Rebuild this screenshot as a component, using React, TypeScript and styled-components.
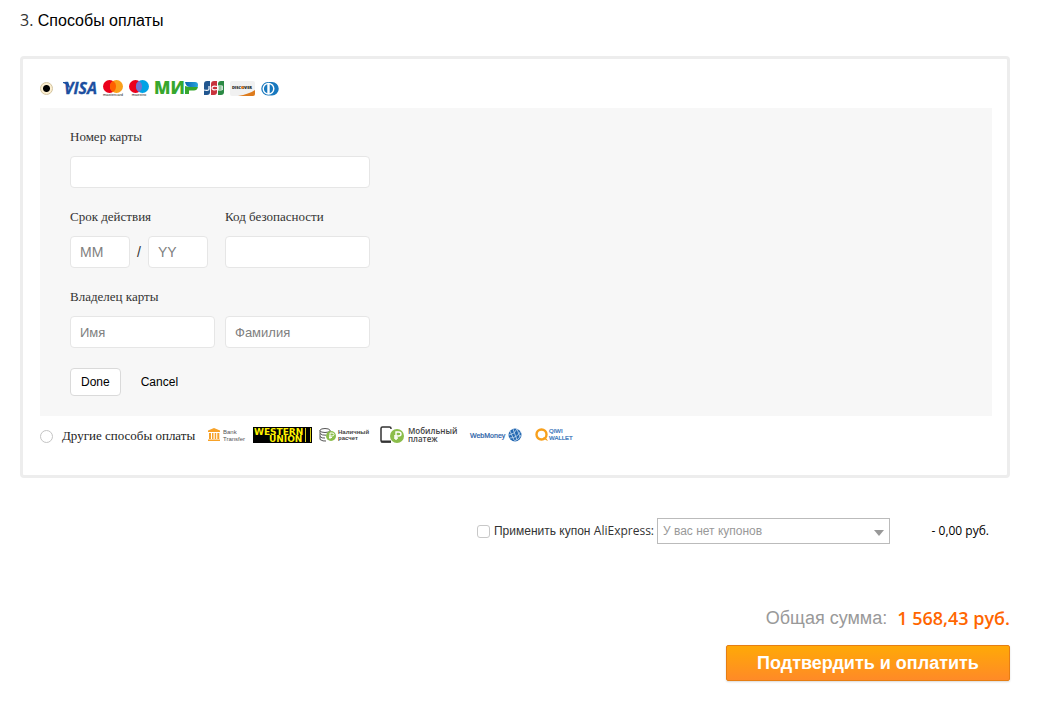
import React, { useState } from 'react';
import styled, { createGlobalStyle } from 'styled-components';

const sans = '"Liberation Sans", Arial, sans-serif';
const open = '"Open Sans", "Liberation Sans", sans-serif';
const serif = '"Liberation Serif", "Times New Roman", serif';

const GlobalStyle = createGlobalStyle`
  * { box-sizing: border-box; }
  body { margin: 0; background: #fff; color: #000; font-family: ${sans}; }
  input, button, select { margin: 0; font-family: ${sans}; }
`;

const Page = styled.main`
  padding: 8px 42px 24px 20px;
`;

const Heading = styled.h1`
  height: 24px;
  margin: 0 0 24px;
  font-size: 16px;
  line-height: 24px;
  font-weight: 400;
`;

const Latin = styled.span`
  font-family: ${open};
  color: #333;
`;

const Methods = styled.section`
  padding: 9px 15px 19px 17px;
  border: 3px solid #ededed;
  border-radius: 4px;
`;

const MethodRow = styled.div`
  display: flex;
  align-items: center;
  height: 40px;
`;

const Radio = styled.input`
  appearance: none;
  flex: none;
  width: 13px;
  height: 13px;
  border: 1px solid #c4c4c4;
  border-radius: 50%;
  background: #fff;
  &:checked {
    border-color: #d3c4a0;
    background: radial-gradient(circle, #000 0 3px, #fbeed0 4px);
  }
`;

const MethodLabel = styled.label`
  display: flex;
  align-items: center;
  padding-left: 9px;
  font-family: ${serif};
  font-size: 13px;
  line-height: 18px;
  color: #222;
`;

const Logos = styled.span<{ $indent: number }>`
  display: flex;
  gap: 6px;
  margin-left: ${(p) => p.$indent}px;
  svg { display: block; flex: none; overflow: visible; }
`;

const CardForm = styled.form`
  padding: 20px 30px;
  background: #f7f7f7;
`;

const FieldRow = styled.div`
  display: flex;
  gap: 10px;
  margin-bottom: 20px;
`;

const FieldSet = styled.fieldset`
  min-width: 0;
  margin: 0;
  padding: 0;
  border: 0;
`;

const Field = styled.div<{ $width: number }>`
  width: ${(p) => p.$width}px;
`;

const Caption = styled.label`
  display: block;
  height: 28px;
  font-family: ${serif};
  font-size: 13px;
  line-height: 18px;
  color: #333;
`;

const Inline = styled.div<{ $gap: number }>`
  display: flex;
  align-items: center;
  gap: ${(p) => p.$gap}px;
  font-size: 14px;
  color: #333;
`;

const TextInput = styled.input<{ $size?: number }>`
  width: 100%;
  height: 32px;
  padding: 0 9px;
  border: 1px solid #e6e6e6;
  border-radius: 4px;
  background: #fff;
  font-size: ${(p) => p.$size ?? 13}px;
  color: #333;
  &::placeholder { color: #808080; opacity: 1; }
`;

const FormButton = styled.button<{ $plain?: boolean }>`
  height: 28px;
  padding: 0 10px;
  border: 1px solid ${(p) => (p.$plain ? 'transparent' : '#dadada')};
  border-radius: 4px;
  background: ${(p) => (p.$plain ? 'transparent' : '#fff')};
  font-size: 12px;
  color: #000;
`;

const CouponRow = styled.div`
  display: flex;
  align-items: center;
  justify-content: flex-end;
  margin-top: 40px;
  padding-right: 21px;
  font-size: 12px;
  line-height: 26px;
`;

const Checkbox = styled.input`
  appearance: none;
  width: 13px;
  height: 13px;
  border: 1px solid #c8c8c8;
  border-radius: 3px;
  background: #fff;
  &:checked { background: #777; }
`;

const CouponLabel = styled.label`
  height: 26px;
  padding: 0 3px 0 4px;
  color: #333;
`;

const SelectBox = styled.div`
  position: relative;
  width: 233px;
  height: 26px;
  svg { position: absolute; right: 6px; top: 12px; pointer-events: none; }
`;

const Select = styled.select`
  appearance: none;
  display: block;
  width: 100%;
  height: 26px;
  padding: 0 20px 0 5px;
  border: 1px solid #bbb;
  border-radius: 0;
  background: #fff;
  font-size: 12px;
  color: #999;
`;

const Discount = styled.span`
  min-width: 99px;
  font-family: ${open};
  text-align: right;
`;

const TotalRow = styled.div`
  display: flex;
  justify-content: flex-end;
  align-items: center;
  gap: 10px;
  margin: 62px 0 14px;
  font-size: 18px;
  line-height: 25px;
  color: #999;
`;

const TotalValue = styled.strong`
  font-family: ${open};
  font-weight: 600;
  color: #f60;
`;

const Actions = styled.div`
  display: flex;
  justify-content: flex-end;
`;

const PayButton = styled.button`
  width: 284px;
  height: 36px;
  border: 1px solid #e67e13;
  border-radius: 2px;
  background: linear-gradient(#ffa907, #ff8a27);
  box-shadow: 0 1px 2px rgba(0, 0, 0, 0.15);
  font-size: 18px;
  font-weight: 700;
  color: #fff;
`;

const CardLogos = () => (
  <Logos $indent={1}>
    <svg width="34" height="18" role="img" aria-label="Visa">
      <text x="1" y="15" fontFamily="Open Sans" fontWeight="700" fontStyle="italic" fontSize="16" fill="#1c4fa0" stroke="#1c4fa0" strokeWidth="0.300">VISA</text>
      <path d="M0 3h5l2 5-1 1Q4 5 0 4z" fill="#1c4fa0" />
    </svg>
    <svg width="20" height="18" role="img" aria-label="Mastercard">
      <circle cx="6.500" cy="7.500" r="6.500" fill="#eb001b" />
      <circle cx="13.500" cy="7.500" r="6.500" fill="#f9a01b" />
      <path d="M10 2a6.500 6.500 0 0 1 0 11a6.500 6.500 0 0 1 0-11z" fill="#ff5f00" />
      <text x="10" y="17" textAnchor="middle" fontFamily="Liberation Sans" fontSize="4" fill="#222">mastercard</text>
    </svg>
    <svg width="20" height="18" role="img" aria-label="Maestro">
      <circle cx="6.500" cy="7.500" r="6.500" fill="#eb001b" />
      <circle cx="13.500" cy="7.500" r="6.500" fill="#00a2e5" />
      <path d="M10 2a6.500 6.500 0 0 1 0 11a6.500 6.500 0 0 1 0-11z" fill="#7375cf" />
      <text x="10" y="17" textAnchor="middle" fontFamily="Liberation Sans" fontSize="4" fill="#222">maestro</text>
    </svg>
    <svg width="43" height="18" role="img" aria-label="Мир">
      <defs>
        <linearGradient id="mir" x1="0" x2="1">
          <stop offset="0" stopColor="#0b63b0" />
          <stop offset="1" stopColor="#28a5df" />
        </linearGradient>
      </defs>
      <text x="-1" y="15" fontFamily="Open Sans" fontWeight="800" fontSize="17" fill="#37a72e">МИ</text>
      <path d="M30 7v8h4v-3.500h5q3 0 4-3.500H34z" fill="#37a72e" />
      <path d="M30 3h10q3 0 3 3l-.300 2H35q-4 0-5-5z" fill="url(#mir)" />
    </svg>
    <svg width="20" height="18" role="img" aria-label="JCB">
      <path d="M3 2h3v11q0 3-3 3H0V5q0-3 3-3z" fill="#21568f" />
      <path d="M10 2h3v11q0 3-3 3H7V5q0-3 3-3z" fill="#c8343d" />
      <path d="M17 2h3v11q0 3-3 3h-3V5q0-3 3-3z" fill="#2c8a45" />
      <path d="M0 11q5 1 5-1V7M13 7.500q-5-1-5 1.500t5 1.500M14 7h4q1 2-1 2h-3h4q1 2-1 2h-3z" fill="none" stroke="#fff" strokeWidth="1.200" />
    </svg>
    <svg width="25" height="18" role="img" aria-label="Discover">
      <rect y="2" width="25" height="15" rx="2" fill="#f1f1f1" />
      <path d="M25 11v4q0 2-2 2H8q11-2 17-6z" fill="#dd7b1d" />
      <text x="12" y="10" textAnchor="middle" fontFamily="Open Sans" fontWeight="800" fontSize="4" fill="#222">DISCOVER</text>
      <circle cx="12.500" cy="8.500" r="1.300" fill="#f58220" />
    </svg>
    <svg width="18" height="18" role="img" aria-label="Diners Club">
      <path d="M7 3h4a6.500 6.500 0 0 1 0 13.500H7A6.500 6.500 0 0 1 7 3z" fill="#1878be" />
      <circle cx="7.500" cy="9.700" r="6" fill="#fff" />
      <path d="M6.300 5.200a4.700 4.700 0 0 0 0 9zM8.700 5.200a4.700 4.700 0 0 1 0 9z" fill="#1878be" />
    </svg>
  </Logos>
);

const OtherLogos = () => (
  <Logos $indent={13}>
    <svg width="39" height="20" role="img" aria-label="Bank Transfer">
      <path d="M0 6v-1.500L6 2l6 2.500V6zM1 7h2v6H1zM4 7h1.500v6H4zM6.700 7h1.500v6H6.700zM9.300 7h2v6h-2zM0 13.500h12V15H0z" fill="#f7a229" />
      <text x="15" y="8" fontFamily="Liberation Sans" fontSize="6" fill="#555">Bank</text>
      <text x="15" y="15" fontFamily="Liberation Sans" fontSize="6" fill="#555">Transfer</text>
    </svg>
    <svg width="60" height="20" role="img" aria-label="Western Union">
      <rect y="1" width="59" height="16" fill="#000" />
      <text x="1" y="9" fontFamily="DejaVu Sans" fontWeight="700" fontSize="9" fill="#fff200">WESTERN</text>
      <text x="16" y="16" fontFamily="DejaVu Sans" fontWeight="700" fontSize="9" fill="#fff200">UNION</text>
      <path d="M52.500 2v14M57.500 2v14" stroke="#d9ce1c" />
    </svg>
    <svg width="55" height="20" role="img" aria-label="Наличный расчет">
      <g fill="none" stroke="#555">
        <ellipse cx="6" cy="4.500" rx="5" ry="2" />
        <path d="M1 4.500v3q2 2 6 1.700M11 4.500v2M1 7.500v6q3 2 6 1.500M1 10.500q2 2 5 1.500" />
      </g>
      <circle cx="12" cy="10" r="5" fill="#8bbd4b" />
      <path d="M11 13V7h2q2 0 2 1.500T13 10h-3M10 11.500h3" fill="none" stroke="#fff" />
      <text x="19" y="8" fontFamily="Liberation Sans" fontWeight="700" fontSize="6" fill="#444">Наличный</text>
      <text x="19" y="14" fontFamily="Liberation Sans" fontWeight="700" fontSize="6" fill="#444">расчет</text>
    </svg>
    <svg width="84" height="20" role="img" aria-label="Мобильный платеж">
      <path d="M11 3V2.500Q11 1 9.500 1h-7Q1 1 1 2.500v12Q1 16 2.500 16H11" fill="none" stroke="#333" strokeWidth="1.500" />
      <path d="M1 14.500h10v2H1z" fill="#333" />
      <circle cx="17" cy="10" r="7" fill="#8bbd4b" />
      <path d="M16 14V6h2.500q2.500 0 2.500 2t-2.500 2H14M14 12h4" fill="none" stroke="#fff" strokeWidth="1.400" />
      <text x="28" y="8" fontFamily="Open Sans" fontWeight="600" fontSize="8" fill="#444">Мобильный</text>
      <text x="28" y="16" fontFamily="Open Sans" fontWeight="600" fontSize="8" fill="#444">платеж</text>
    </svg>
    <svg width="59" height="20" role="img" aria-label="WebMoney">
      <text x="0" y="12" fontFamily="Liberation Sans" fontSize="7" fill="#1f5ca6" stroke="#1f5ca6" strokeWidth="0.200">WebMoney</text>
      <circle cx="45" cy="9" r="6.500" fill="#2569b2" />
      <path d="M40 5l4 9M43 3l4 11M47 3l3 8M39 9q6-1 8-6M40 12q7 0 11-7M44 15q5-1 7-6" fill="none" stroke="#c9dcf0" strokeWidth="0.800" />
    </svg>
    <svg width="38" height="20" role="img" aria-label="QIWI Wallet">
      <circle cx="6.500" cy="8.500" r="5" fill="none" stroke="#f8a01c" strokeWidth="2.400" />
      <path d="M8 11q3 0 5 4-3-1-5-4z" fill="#f8a01c" />
      <text x="14" y="7" fontFamily="Liberation Sans" fontSize="6" fill="#2f6fb7" stroke="#2f6fb7" strokeWidth="0.200">QIWI</text>
      <text x="14" y="14" fontFamily="Liberation Sans" fontSize="6" fill="#2f6fb7" stroke="#2f6fb7" strokeWidth="0.200">WALLET</text>
    </svg>
  </Logos>
);

export default function App() {
  const [method, setMethod] = useState('card');
  return (
    <Page>
      <GlobalStyle />
      <Heading><Latin>3.</Latin> Способы оплаты</Heading>
      <Methods>
        <MethodRow>
          <Radio type="radio" id="card" name="method" checked={method === 'card'} onChange={() => setMethod('card')} />
          <MethodLabel htmlFor="card"><CardLogos /></MethodLabel>
        </MethodRow>
        <CardForm onSubmit={(e) => e.preventDefault()}>
          <FieldRow>
            <Field $width={300}>
              <Caption htmlFor="number">Номер карты</Caption>
              <TextInput id="number" inputMode="numeric" />
            </Field>
          </FieldRow>
          <FieldRow>
            <Field $width={145}>
              <Caption htmlFor="month">Срок действия</Caption>
              <Inline $gap={7}>
                <Field $width={60}><TextInput $size={14} id="month" placeholder="MM" /></Field>
                /
                <Field $width={60}><TextInput $size={14} id="year" placeholder="YY" aria-label="YY" /></Field>
              </Inline>
            </Field>
            <Field $width={145}>
              <Caption htmlFor="code">Код безопасности</Caption>
              <TextInput id="code" inputMode="numeric" />
            </Field>
          </FieldRow>
          <FieldSet>
            <Caption htmlFor="first">Владелец карты</Caption>
            <FieldRow>
              <Field $width={145}><TextInput id="first" placeholder="Имя" /></Field>
              <Field $width={145}><TextInput id="last" placeholder="Фамилия" aria-label="Фамилия" /></Field>
            </FieldRow>
          </FieldSet>
          <Inline $gap={9}>
            <FormButton type="submit">Done</FormButton>
            <FormButton type="button" $plain>Cancel</FormButton>
          </Inline>
        </CardForm>
        <MethodRow>
          <Radio type="radio" id="other" name="method" checked={method === 'other'} onChange={() => setMethod('other')} />
          <MethodLabel htmlFor="other">Другие способы оплаты<OtherLogos /></MethodLabel>
        </MethodRow>
      </Methods>
      <CouponRow>
        <Checkbox type="checkbox" id="coupon" />
        <CouponLabel htmlFor="coupon">Применить купон <Latin>AliExpress:</Latin></CouponLabel>
        <SelectBox>
          <Select aria-label="Купон"><option>У вас нет купонов</option></Select>
          <svg width="10" height="6" aria-hidden="true"><path d="M0 0h10L5 6z" fill="#999" /></svg>
        </SelectBox>
        <Discount>- 0,00 руб.</Discount>
      </CouponRow>
      <TotalRow>Общая сумма: <TotalValue>1 568,43 руб.</TotalValue></TotalRow>
      <Actions><PayButton type="button">Подтвердить и оплатить</PayButton></Actions>
    </Page>
  );
}
